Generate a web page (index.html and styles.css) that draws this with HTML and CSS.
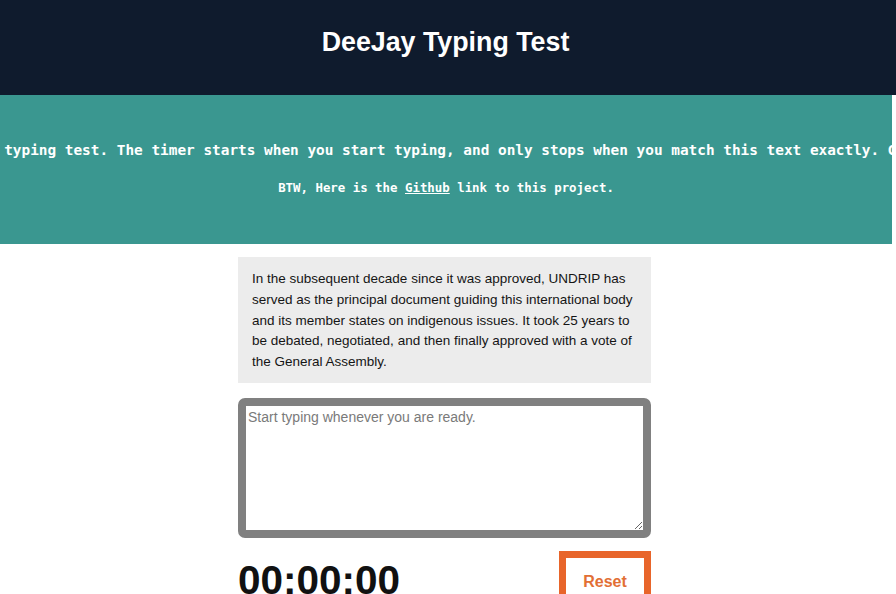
FILE: index.html
```html
<!DOCTYPE html>
<html lang="en">
<head>
<meta charset="utf-8">
<title>DeeJay Typing Test</title>
<link rel="stylesheet" href="styles.css">
</head>
<body>
<header class="site-header">
  <h1 class="title">DeeJay Typing Test</h1>
</header>
<section class="intro">
  <div class="intro-line intro-main"><span>This is a typing test. The timer starts when you start typing, and only stops when you match this text exactly. Good luck!</span></div>
  <div class="intro-line intro-sub"><span>BTW, Here is the <a href="#" class="intro-link">Github</a> link to this project.</span></div>
</section>
<main class="main">
  <div class="test">
    <div class="origin-text">
      <p>In the subsequent decade since it was approved, UNDRIP has served as the principal document guiding this international body and its member states on indigenous issues. It took 25 years to be debated, negotiated, and then finally approved with a vote of the General Assembly.</p>
    </div>
    <textarea class="test-area" placeholder="Start typing whenever you are ready."></textarea>
    <div class="meta">
      <div class="timer">00:00:00</div>
      <button class="reset" type="button">Reset</button>
    </div>
  </div>
</main>
</body>
</html>
```
FILE: styles.css
```css
* { box-sizing: border-box; }
html, body { margin: 0; padding: 0; }
body {
  font-family: "Liberation Sans", Arial, sans-serif;
  background: #fff;
  color: #111;
  overflow: hidden;
}
.site-header {
  background: #0f1b2d;
  height: 95px;
  display: flex;
  align-items: center;
  justify-content: center;
  padding: 0 5px 10px 0;
}
.title {
  margin: 0;
  color: #fff;
  font-size: 26.8px;
  font-weight: bold;
  line-height: 1.15;
}
.intro {
  background: #3a9790;
  width: calc(100% - 4px);
  padding: 45px 0 47px;
  display: flex;
  flex-direction: column;
  gap: 19px;
  overflow: hidden;
  color: #fff;
  font-family: "DejaVu Sans Mono", "Liberation Mono", monospace;
  font-weight: bold;
}
.intro-line {
  display: flex;
  justify-content: center;
  white-space: nowrap;
}
.intro-line span { flex: none; }
.intro-main { font-size: 14.4px; line-height: 20px; }
.intro-sub { font-size: 12.4px; line-height: 18px; }
.intro-link { color: #fff; text-decoration: underline; }
.main {
  padding: 13px 7px 0 0;
}
.test {
  width: 413px;
  margin: 0 auto;
}
.origin-text {
  background: #ececec;
  padding: 12px 14px 10px;
}
.origin-text p {
  margin: 0;
  font-size: 13.5px;
  line-height: 20.8px;
  color: #151515;
}
.test-area {
  display: block;
  width: 100%;
  height: 140px;
  margin-top: 15px;
  border: 8px solid #808080;
  border-radius: 7px;
  padding: 3px 2px 2px;
  font-family: "Liberation Sans", Arial, sans-serif;
  font-size: 14px;
  color: #222;
  background: #fff;
  resize: vertical;
  outline: none;
}
.test-area::placeholder { color: #7a7a7a; }
.meta {
  margin-top: 13px;
  display: flex;
  justify-content: space-between;
  align-items: flex-start;
}
.timer {
  margin-top: 6px;
  font-size: 40.5px;
  font-weight: bold;
  color: #111;
  line-height: 46px;
}
.reset {
  border: 7px solid #e8652a;
  background: #fff;
  color: #e26f35;
  font-family: "Liberation Sans", Arial, sans-serif;
  font-size: 16px;
  font-weight: bold;
  padding: 15px 17px 14px;
  line-height: 18px;
  width: 92px;
  cursor: pointer;
}
```
